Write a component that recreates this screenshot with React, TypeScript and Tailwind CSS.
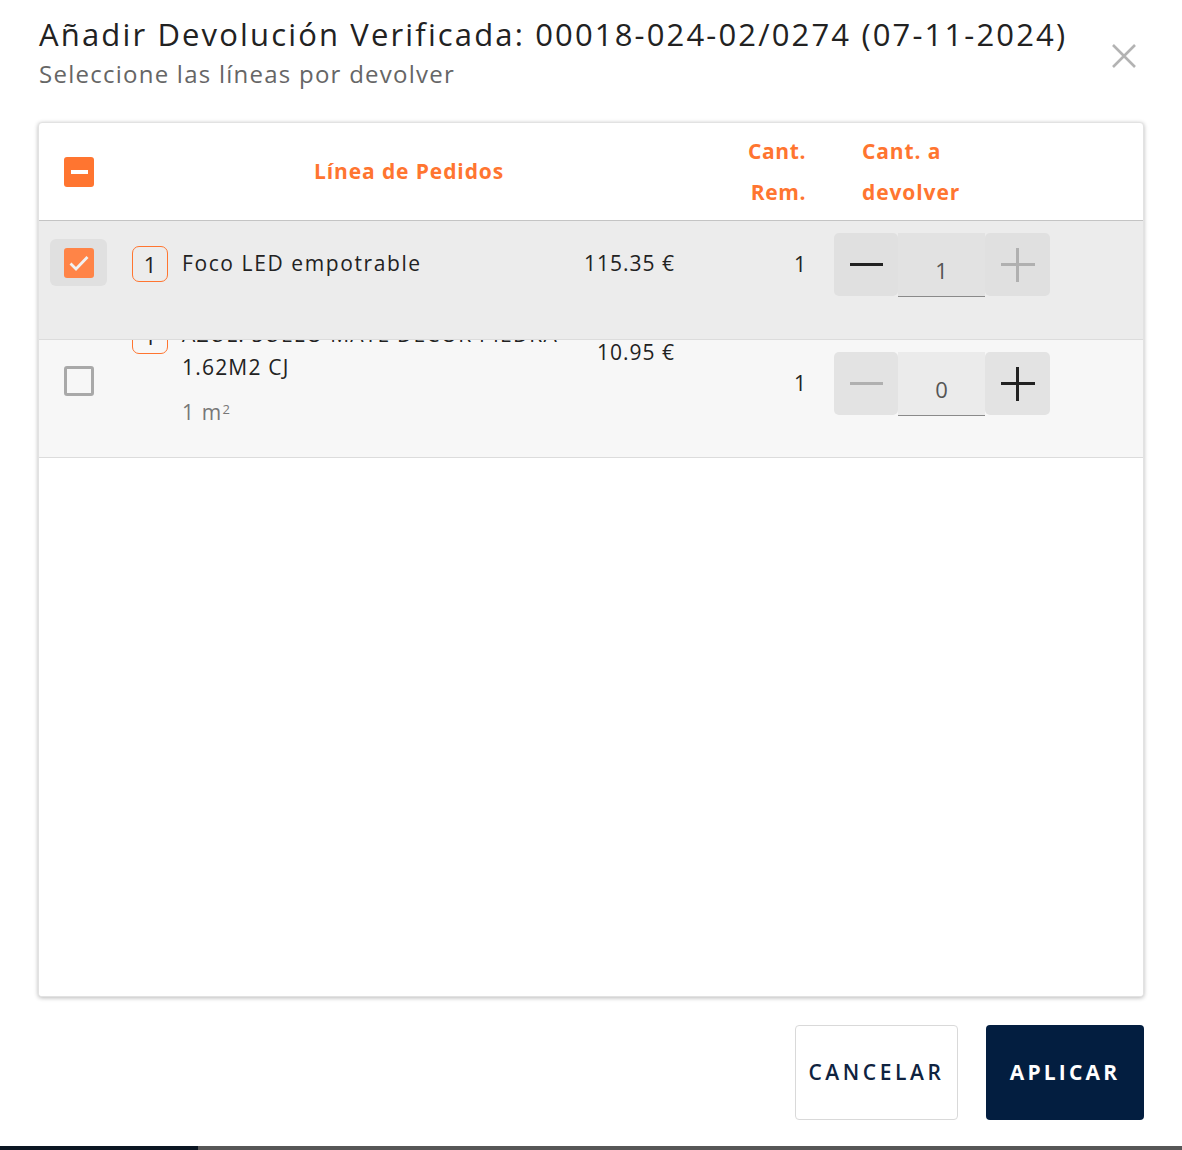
import React from "react";

const ORANGE = "text-[#ff7530]";

function Stepper({ value, minusActive, plusActive, inputBg, btnBg }: { value: string; minusActive: boolean; plusActive: boolean; inputBg: string; btnBg: string }) {
  return (
    <div className="flex h-[63px]">
      <div className={`w-[64px] h-[63px] rounded-[5px] flex items-center justify-center ${btnBg}`}>
        <div className={`w-[33px] h-[3px] ${minusActive ? "bg-[#222]" : "bg-[#b0b0b0]"}`} />
      </div>
      <div className={`w-[87px] h-[64px] border-b border-[#8a8a8a] flex items-center justify-center pt-[12px] text-[22px] text-[#555] ${inputBg}`}>
        {value}
      </div>
      <div className={`w-[65px] h-[63px] rounded-[5px] flex items-center justify-center ${btnBg}`}>
        <div className="relative w-[34px] h-[34px]">
          <div className={`absolute left-0 top-[15.5px] w-[34px] h-[3px] ${plusActive ? "bg-[#222]" : "bg-[#b0b0b0]"}`} />
          <div className={`absolute top-0 left-[15.5px] h-[34px] w-[3px] ${plusActive ? "bg-[#222]" : "bg-[#b0b0b0]"}`} />
        </div>
      </div>
    </div>
  );
}

function Badge() {
  return (
    <div className="w-[36px] h-[36px] shrink-0 rounded-[7px] border border-[#ff7530] flex items-center justify-center text-[22px] text-[#222]">
      1
    </div>
  );
}

export default function App() {
  return (
    <div className="w-[1182px] h-[1150px] bg-white flex flex-col font-['Open_Sans',sans-serif]">
      <div className="h-[1146px] bg-white rounded-b-[6px] flex flex-col">
        {/* Header */}
        <div className="relative pl-[39px] pt-[13px] h-[122px]">
          <div className="text-[31px] font-medium leading-[42px] text-[#222] tracking-[2.15px] whitespace-nowrap">
            Añadir Devolución Verificada: 00018-024-02/0274 (07-11-2024)
          </div>
          <div className="text-[24px] leading-[38px] text-[#666] tracking-[1.25px]">Seleccione las líneas por devolver</div>
          <button className="absolute left-[1108px] top-[40px] w-[32px] h-[32px] flex items-center justify-center">
            <svg width="26" height="26" viewBox="0 0 26 26">
              <path d="M2 2 L24 24 M24 2 L2 24" stroke="#b3b3b3" strokeWidth="2.6" fill="none" />
            </svg>
          </button>
        </div>

        {/* Card */}
        <div className="mx-[38px] h-[875px] rounded-[4px] border border-[#e2e2e2] shadow-[0_1px_4px_rgba(0,0,0,0.28)] bg-white overflow-hidden flex flex-col">
          {/* Table header */}
          <div className="grid grid-cols-[82px_576px_124px_1fr] h-[98px] border-b border-[#c4c4c4] shrink-0">
            <div className="flex items-center pl-[25px]">
              <div className="w-[30px] h-[30px] rounded-[3px] bg-[#ff7530] flex items-center justify-center">
                <div className="w-[17px] h-[4px] bg-white" />
              </div>
            </div>
            <div className={`flex items-center justify-center font-bold text-[21px] tracking-[0.9px] ${ORANGE}`}>Línea de Pedidos</div>
            <div className={`flex flex-col justify-center items-end pr-[15px] font-bold text-[21px] leading-[41px] tracking-[0.6px] ${ORANGE}`}>
              <span>Cant.</span>
              <span>Rem.</span>
            </div>
            <div className={`flex flex-col justify-center pl-[41px] font-bold text-[21px] leading-[41px] tracking-[0.9px] ${ORANGE}`}>
              <span>Cant. a</span>
              <span>devolver</span>
            </div>
          </div>

          {/* Row 1 */}
          <div className="grid grid-cols-[82px_576px_124px_1fr] h-[118px] bg-[#ececec] shrink-0">
            <div className="pl-[11px] pt-[18px]">
              <div className="w-[57px] h-[47px] rounded-[6px] bg-[#e0e0e0] flex items-center justify-center">
                <div className="w-[30px] h-[30px] rounded-[3px] bg-[#ff8447] flex items-center justify-center">
                  <svg width="22" height="18" viewBox="0 0 22 18">
                    <path d="M2.5 9.5 L8 15 L19.5 3" stroke="#f1f1f1" strokeWidth="2.8" fill="none" />
                  </svg>
                </div>
              </div>
            </div>
            <div className="flex items-start pl-[11px] pr-[22px] pt-[25px]">
              <Badge />
              <div className="ml-[14px] text-[21px] leading-[34px] text-[#222] flex-1 min-w-0 tracking-[1.6px]">Foco LED empotrable</div>
              <div className="text-[21px] leading-[34px] text-[#222] tracking-[1px] whitespace-nowrap">115.35 €</div>
            </div>
            <div className="pr-[15px] pt-[26px] text-right text-[21px] leading-[34px] text-[#222]">1</div>
            <div className="pl-[13px] pt-[12px]">
              <Stepper value="1" minusActive={true} plusActive={false} inputBg="bg-[#e2e2e2]" btnBg="bg-[#e0e0e0]" />
            </div>
          </div>

          {/* Row 2 */}
          <div className="grid grid-cols-[82px_576px_124px_1fr] h-[119px] bg-[#f7f7f7] border-t border-b border-[#dcdcdc] overflow-hidden shrink-0">
            <div className="pl-[25px] pt-[26px]">
              <div className="w-[30px] h-[30px] rounded-[3px] border-[3px] border-[#a9a9a9] bg-[#f7f7f7]" />
            </div>
            <div className="flex items-start pl-[11px] pr-[22px] mt-[-22px]">
              <Badge />
              <div className="ml-[14px] text-[21px] leading-[33px] text-[#222] flex-1 min-w-0 whitespace-nowrap tracking-[1.2px]">
                <div>AZUL. SUELO MATE DECOR PIEDRA</div>
                <div>1.62M2 CJ</div>
                <div className="text-[#777] mt-[12px]">
                  1 m<sup className="text-[13px]">2</sup>
                </div>
              </div>
              <div className="text-[21px] leading-[34px] text-[#222] pt-[17px] tracking-[1px] whitespace-nowrap">10.95 €</div>
            </div>
            <div className="pr-[15px] pt-[26px] text-right text-[21px] leading-[34px] text-[#222]">1</div>
            <div className="pl-[13px] pt-[12px]">
              <Stepper value="0" minusActive={false} plusActive={true} inputBg="bg-[#ebebeb]" btnBg="bg-[#e3e3e3]" />
            </div>
          </div>
          <div className="flex-1 bg-white" />
        </div>

        {/* Footer */}
        <div className="flex justify-end gap-[28px] pr-[38px] pt-[28px]">
          <button className="w-[163px] h-[95px] rounded-[4px] border border-[#d9d9d9] bg-white text-[21px] font-semibold tracking-[3.6px] text-[#0f2340]">
            CANCELAR
          </button>
          <button className="w-[158px] h-[95px] rounded-[4px] bg-[#031e40] text-[21px] font-bold tracking-[3.2px] text-white">
            APLICAR
          </button>
        </div>
      </div>
      <div className="h-[4px] flex">
        <div className="w-[198px] bg-[#0b1622]" />
        <div className="flex-1 bg-[#575757]" />
      </div>
    </div>
  );
}
